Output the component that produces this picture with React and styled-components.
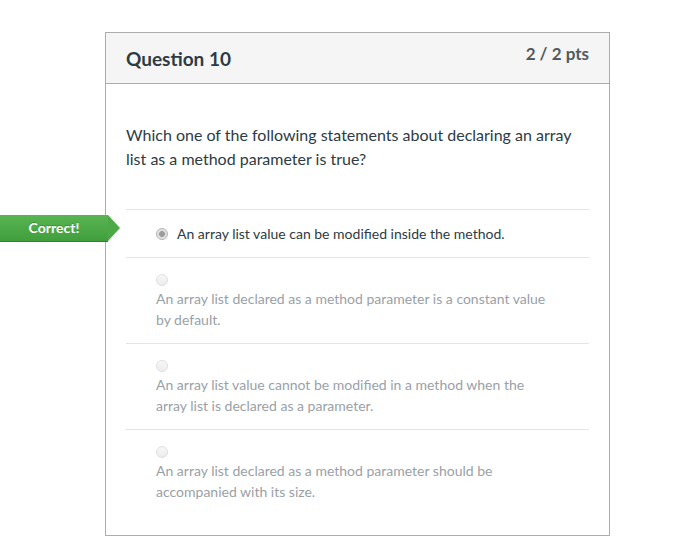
import React from "react";
import styled, { createGlobalStyle } from "styled-components";

const Global = createGlobalStyle`
  html, body { margin: 0; padding: 0; background: #fff; }
  body { font-family: Lato, "Noto Sans", sans-serif; color: #2d3b45; }
`;

const Page = styled.div`
  padding: 32px 0 0 105px;
`;

const Card = styled.div`
  width: 503px;
  border: 1px solid #acacac;
  background: #fff;
`;

const Header = styled.div`
  display: flex;
  justify-content: space-between;
  align-items: flex-start;
  height: 50px;
  padding: 0 20px;
  background: #f5f5f5;
  border-bottom: 1px solid #acacac;
`;

const Title = styled.h2`
  margin: 14px 0 0;
  font-size: 19px;
  font-weight: 700;
  line-height: 24px;
  color: #2d3b45;
`;

const Points = styled.div`
  margin-top: 10px;
  font-size: 17px;
  font-weight: 700;
  line-height: 22px;
  color: #505a60;
`;

const Body = styled.div`
  padding: 39px 20px 20px;
`;

const QuestionText = styled.p`
  margin: 0 0 38px;
  font-size: 16px;
  line-height: 24px;
  color: #2d3b45;
`;

const Answers = styled.div`
  border-top: 1px solid #e3e6e8;
`;

const Answer = styled.div`
  position: relative;
  padding: 13px 0 13px 30px;
  border-bottom: ${(p) => (p.$last ? "none" : "1px solid #e3e6e8")};
  display: ${(p) => (p.$inline ? "flex" : "block")};
  align-items: center;
  gap: 9px;
`;

const RadioLine = styled.div`
  height: 17px;
  display: flex;
  align-items: flex-start;
  padding-top: 3px;
  box-sizing: border-box;
`;

const Radio = styled.span`
  display: inline-block;
  box-sizing: border-box;
  width: 12px;
  height: 12px;
  border-radius: 50%;
  flex: none;
  border: 1px solid ${(p) => (p.$checked ? "#b3b3b3" : "#e0e0e0")};
  background: ${(p) =>
    p.$checked
      ? "radial-gradient(circle, #9c9c9c 0 2.6px, #dcdcdc 3.2px, #f0f0f0 100%)"
      : "linear-gradient(#f7f7f7, #ededed)"};
`;

const AnswerText = styled.div`
  font-size: 14px;
  line-height: 21px;
  max-width: ${(p) => (p.$muted ? "400px" : "none")};
  color: ${(p) => (p.$muted ? "#99a1a7" : "#2d3b45")};
`;

const Badge = styled.div`
  position: absolute;
  left: -126px;
  top: 5px;
  width: 108px;
  height: 27px;
  box-sizing: border-box;
  display: flex;
  align-items: center;
  justify-content: center;
  padding-bottom: 1px;
  background: linear-gradient(#58b552, #419e3c);
  border-bottom: 1px solid #347f30;
  color: #fff;
  font-size: 14px;
  font-weight: 700;
  text-shadow: 0 -1px 0 rgba(0, 0, 0, 0.2);
  &::after {
    content: "";
    position: absolute;
    right: -12px;
    top: 0;
    width: 0;
    height: 0;
    border-top: 13.5px solid transparent;
    border-bottom: 13.5px solid transparent;
    border-left: 12px solid #4caa46;
  }
`;

const others = [
  "An array list declared as a method parameter is a constant value by default.",
  "An array list value cannot be modified in a method when the array list is declared as a parameter.",
  "An array list declared as a method parameter should be accompanied with its size.",
];

export default function App() {
  return (
    <>
      <Global />
      <Page>
        <Card>
          <Header>
            <Title>Question 10</Title>
            <Points>2 / 2 pts</Points>
          </Header>
          <Body>
            <QuestionText>
              Which one of the following statements about declaring an array
              list as a method parameter is true?
            </QuestionText>
            <Answers>
              <Answer $inline>
                <Badge>Correct!</Badge>
                <Radio $checked />
                <AnswerText>An array list value can be modified inside the method.</AnswerText>
              </Answer>
              {others.map((t, i) => (
                <Answer key={i} $last={i === others.length - 1}>
                  <RadioLine>
                    <Radio />
                  </RadioLine>
                  <AnswerText $muted>{t}</AnswerText>
                </Answer>
              ))}
            </Answers>
          </Body>
        </Card>
      </Page>
    </>
  );
}
